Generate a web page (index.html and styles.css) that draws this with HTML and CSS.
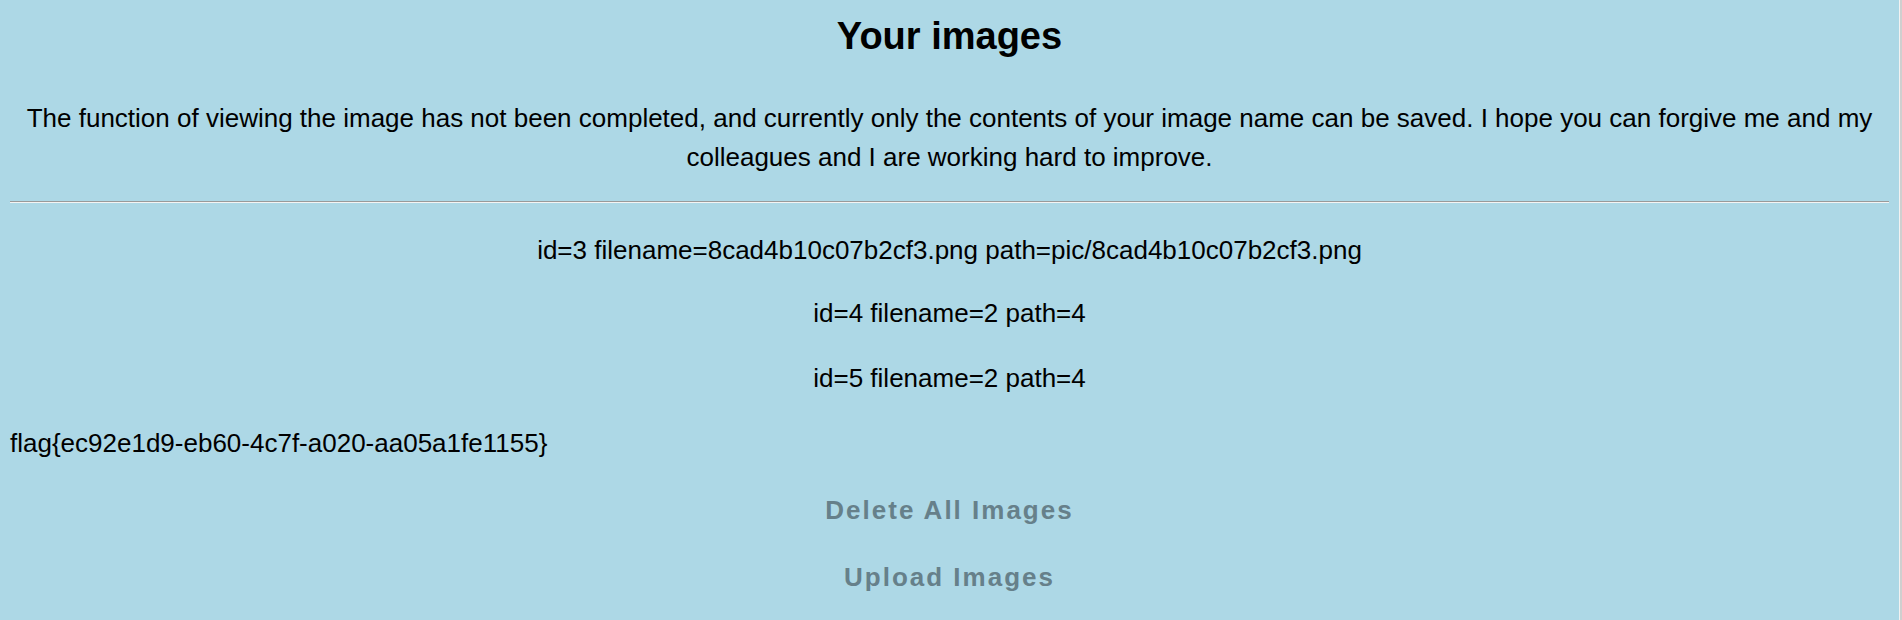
FILE: index.html
```html
<!DOCTYPE html>
<html lang="en">
<head>
<meta charset="utf-8">
<title>Your images</title>
<link rel="stylesheet" href="styles.css">
</head>
<body>
<div class="page">
  <main class="content">
    <h1 class="title">Your images</h1>
    <p class="note">The function of viewing the image has not been completed, and currently only the contents of your image name can be saved. I hope you can forgive me and my colleagues and I are working hard to improve.</p>
    <hr class="rule">
    <p class="row first">id=3 filename=8cad4b10c07b2cf3.png path=pic/8cad4b10c07b2cf3.png</p>
    <p class="row">id=4 filename=2 path=4</p>
    <p class="row">id=5 filename=2 path=4</p>
    <div class="flag">flag{ec92e1d9-eb60-4c7f-a020-aa05a1fe1155}</div>
    <div class="actions">
      <a class="action">Delete All Images</a>
      <a class="action">Upload Images</a>
    </div>
  </main>
  <div class="scrollbar"></div>
</div>
</body>
</html>
```

FILE: styles.css
```css
html, body {
  margin: 0;
  padding: 0;
  height: 100%;
}

body {
  background: #add8e6;
  color: #000;
  font-family: "Liberation Sans", Arial, sans-serif;
  font-size: 26px;
  line-height: 39px;
  overflow: hidden;
}

.page {
  display: flex;
  min-height: 100%;
}

.content {
  flex: 1;
  padding: 0 10px;
  min-width: 0;
}

.title {
  margin: 7px 0 34px;
  font-size: 38px;
  line-height: 58px;
  font-weight: bold;
  text-align: center;
}

.note {
  margin: 0 0 24px;
  text-align: center;
}

.rule {
  margin: 0 0 28px;
  border: 0;
  border-top: 1px solid #9a9a9a;
  border-bottom: 1px solid #f4f4f4;
  height: 0;
}

.row {
  margin: 0 0 26px;
  text-align: center;
}

.row.first {
  margin-bottom: 24px;
}

.flag {
  margin: 0;
}

.actions {
  display: flex;
  flex-direction: column;
  align-items: center;
  gap: 28px;
  padding-top: 28px;
}

.action {
  color: #66808a;
  font-weight: bold;
  letter-spacing: 2px;
  cursor: pointer;
}

.scrollbar {
  width: 2px;
  flex: none;
  border-left: 1px solid #f2f2f2;
  background: #cfcfcf;
}
```
